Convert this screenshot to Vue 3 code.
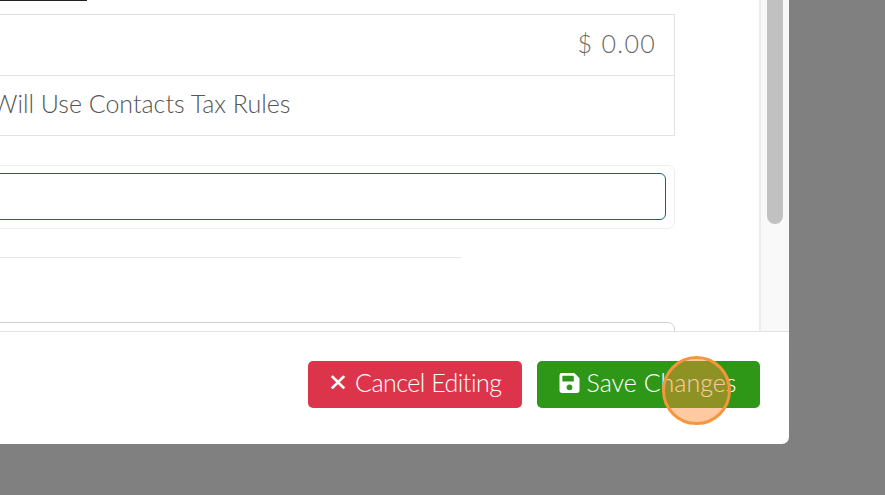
<template>
  <div class="page">
    <div class="modal">
      <div class="modal-body">
        <div class="content">
          <div class="underline"></div>
          <div class="tax-table">
            <div class="tax-row amount">$ 0.00</div>
            <div class="tax-row rules">Will Use Contacts Tax Rules</div>
          </div>
          <div class="input-wrap">
            <input class="field" type="text" />
          </div>
          <hr class="divider" />
          <div class="next-box"></div>
        </div>
        <div class="scrollbar">
          <div class="thumb"></div>
        </div>
      </div>
      <div class="modal-footer">
        <button class="btn cancel">
          <span class="times">✕</span> Cancel Editing
        </button>
        <button class="btn save">
          <svg class="save-icon" viewBox="0 32 448 448" aria-hidden="true">
            <path fill="currentColor" fill-rule="evenodd" d="M48 32h268a48 48 0 0 1 34 14l84 84a48 48 0 0 1 14 34v268a48 48 0 0 1-48 48H48a48 48 0 0 1-48-48V80a48 48 0 0 1 48-48zM76 96a12 12 0 0 0-12 12v104a12 12 0 0 0 12 12h232a12 12 0 0 0 12-12V112a12 12 0 0 0-3.500-8.500l-3.500-3.500a12 12 0 0 0-8.500-4zM224 288a64 64 0 1 0 0 128 64 64 0 0 0 0-128z" />
          </svg>
          Save Changes
        </button>
      </div>
    </div>
    <div class="click-marker"></div>
  </div>
</template>

<script setup>
</script>

<style>
html,
body {
  margin: 0;
  overflow: hidden;
}
</style>

<style scoped>
.page {
  position: relative;
  width: 885px;
  height: 495px;
  background: #808080;
  overflow: hidden;
  font-family: "Lato", "Open Sans", sans-serif;
}

.modal {
  width: 789px;
  height: 444px;
  background: #fff;
  border-bottom-right-radius: 7px;
  display: flex;
  flex-direction: column;
  overflow: hidden;
}

.modal-body {
  height: 331px;
  display: flex;
  flex-shrink: 0;
  overflow: hidden;
}

.content {
  flex: 1;
  min-width: 0;
}

.underline {
  width: 87px;
  height: 1px;
  background: #222;
}

.tax-table {
  margin-top: 13px;
  margin-right: 84px;
  border-top: 1px solid #e2e2e2;
  border-right: 1px solid #e2e2e2;
  border-bottom: 1px solid #e2e2e2;
}

.tax-row {
  height: 60px;
  line-height: 55px;
  font-size: 25px;
  font-weight: 300;
  color: #555;
}

.amount {
  line-height: 57px;
  text-align: right;
  padding-right: 18px;
  border-bottom: 1px solid #e2e2e2;
  color: #666;
  letter-spacing: 1.3px;
}

.rules {
  margin-left: -8px;
  height: 59px;
}

.input-wrap {
  margin: 29px 84px 0 -10px;
  height: 64px;
  box-sizing: border-box;
  padding: 7px 8px 7px 0;
  border: 1px solid #ededed;
  border-radius: 7px;
}

.field {
  display: block;
  width: 100%;
  height: 47px;
  box-sizing: border-box;
  background: #fff;
  border: 1px solid #1a6080;
  border-radius: 6px;
  outline: none;
}

.divider {
  width: 461px;
  height: 1px;
  margin: 28px 0 0;
  border: 0;
  background: #e8e8e8;
}

.next-box {
  height: 40px;
  margin: 64px 84px 0 -10px;
  border: 1px solid #d2d2d2;
  border-radius: 7px;
}

.scrollbar {
  width: 30px;
  flex-shrink: 0;
  box-sizing: border-box;
  background: #f9f9f9;
  border-left: 2px solid #ececec;
  padding-left: 6px;
}

.thumb {
  width: 16px;
  height: 224px;
  background: #c1c1c1;
  border-radius: 0 0 8px 8px;
}

.modal-footer {
  flex: 1;
  border-top: 1px solid #e4e4e4;
  display: flex;
  justify-content: flex-end;
  gap: 15px;
  padding: 29px 29px 0 0;
}

.btn {
  height: 47px;
  border: 0;
  border-radius: 5px;
  color: #fff;
  font-family: inherit;
  font-size: 25px;
  font-weight: 400;
  display: flex;
  align-items: center;
  justify-content: center;
  gap: 7px;
  padding: 0 0 6px;
}

.cancel {
  width: 214px;
  background: #dc354b;
  font-weight: 300;
  letter-spacing: -0.5px;
}

.times {
  font-size: 24px;
}

.save {
  width: 223px;
  background: #2f9718;
  font-weight: 300;
}

.save-icon {
  width: 21px;
  height: 20px;
  margin: 3px 0 0 -2px;
}

.click-marker {
  position: absolute;
  left: 662px;
  top: 356px;
  width: 69px;
  height: 69px;
  box-sizing: border-box;
  border: 3px solid #f5963c;
  border-radius: 50%;
  background: rgba(255, 140, 50, 0.46);
}
</style>
